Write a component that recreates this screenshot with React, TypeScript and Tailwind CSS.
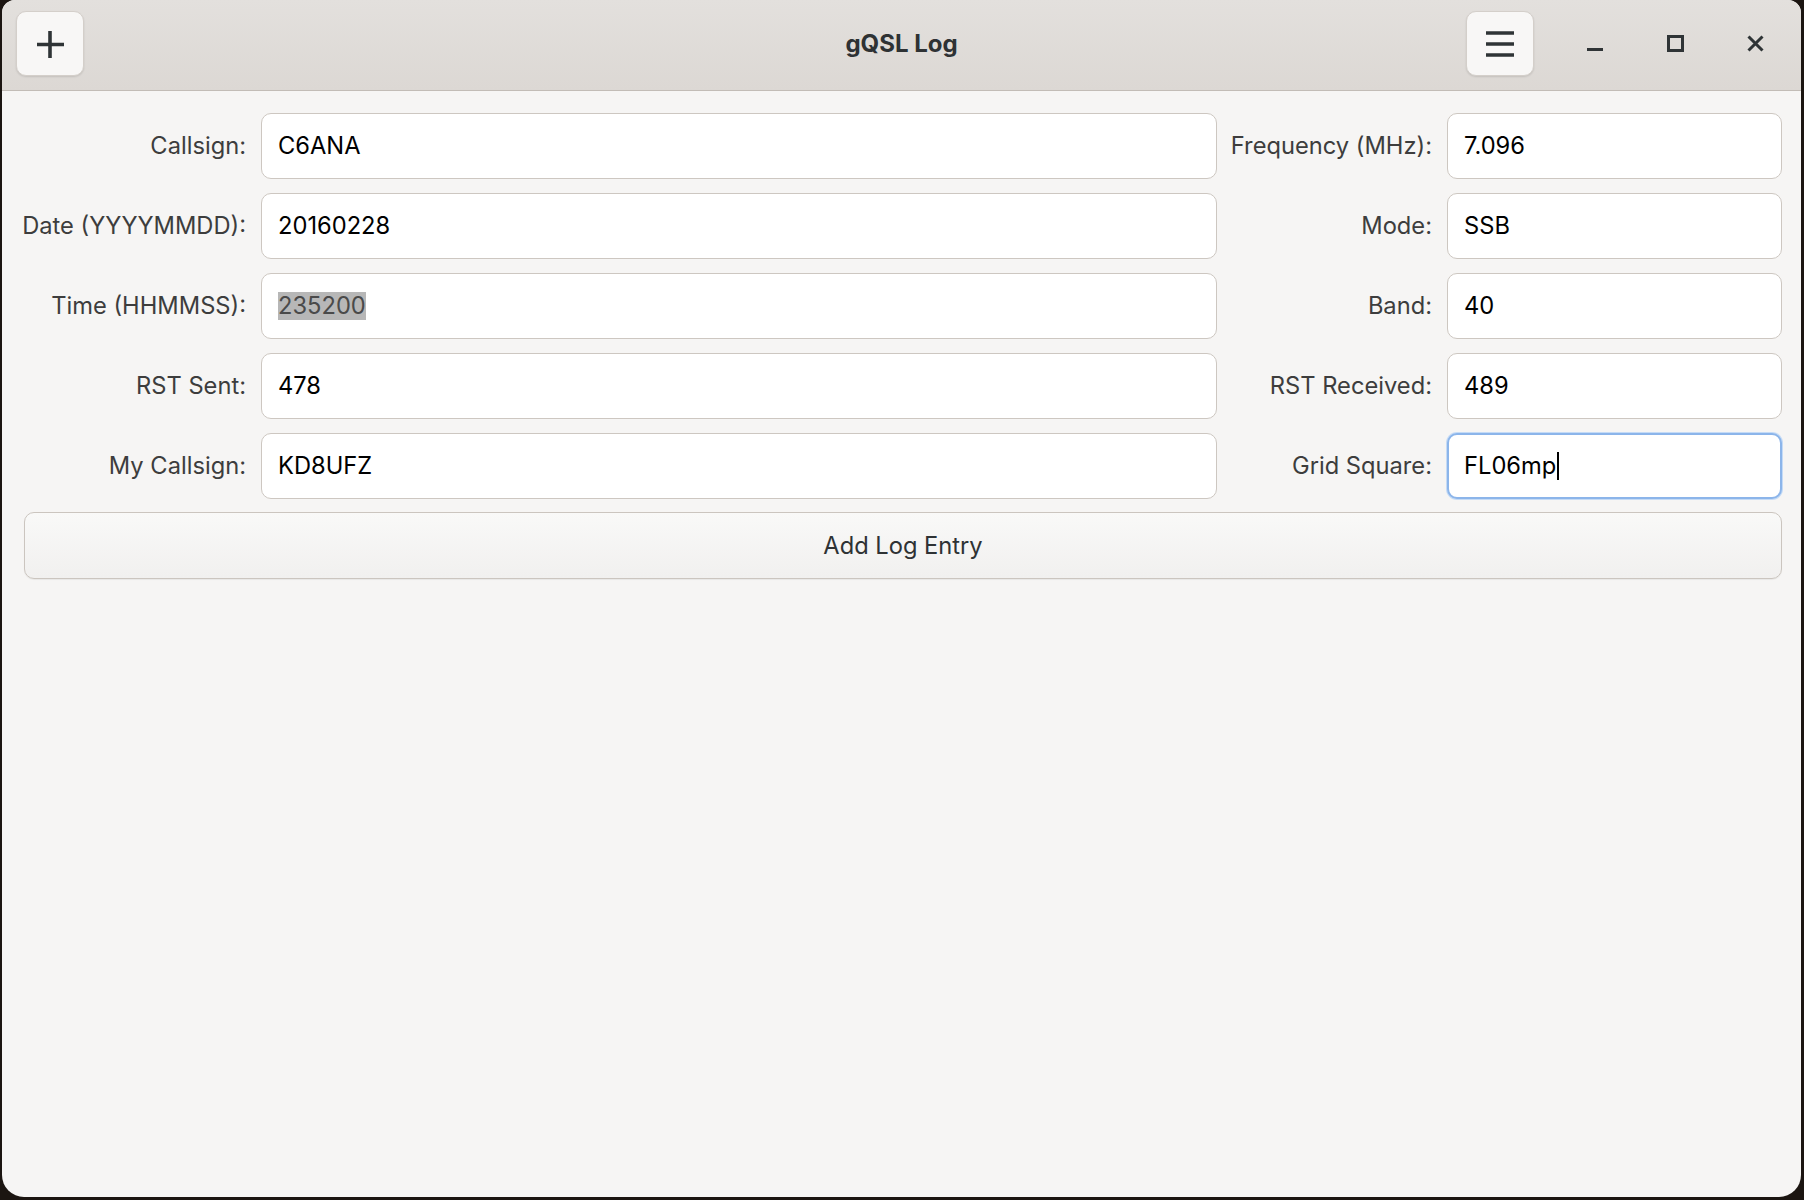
import React from 'react';

const font = { fontFamily: 'Inter, "Noto Sans", sans-serif' };

type Field = { label: string; value: string; selected?: boolean; focused?: boolean };

const rows: [Field, Field][] = [
  [{ label: 'Callsign:', value: 'C6ANA' }, { label: 'Frequency (MHz):', value: '7.096' }],
  [{ label: 'Date (YYYYMMDD):', value: '20160228' }, { label: 'Mode:', value: 'SSB' }],
  [{ label: 'Time (HHMMSS):', value: '235200', selected: true }, { label: 'Band:', value: '40' }],
  [{ label: 'RST Sent:', value: '478' }, { label: 'RST Received:', value: '489' }],
  [{ label: 'My Callsign:', value: 'KD8UFZ' }, { label: 'Grid Square:', value: 'FL06mp', focused: true }],
];

function Label({ text }: { text: string }) {
  return <div className="flex items-center justify-end text-[23.7px] text-[#3d3d3d] whitespace-nowrap">{text}</div>;
}

function Entry({ f }: { f: Field }) {
  const border = f.focused
    ? 'border-2 border-[#8cb5ea] shadow-[0_0_0_1px_#c5dbf6]'
    : 'border border-[#cdc7c1]';
  return (
    <div className={`flex items-center h-[66px] rounded-[10px] bg-white ${f.focused ? 'pl-[15px]' : 'pl-[16px]'} ${border}`}>
      {f.selected ? (
        <span className="text-[23.7px] text-[#4a4a4a] bg-[#b7b7b7] leading-[28px]">{f.value}</span>
      ) : (
        <span className="text-[23.7px] text-black leading-[28px]">{f.value}</span>
      )}
      {f.focused && <span className="w-[2px] h-[28px] bg-black ml-[1px]" />}
    </div>
  );
}

function HeaderButton({ children }: { children: React.ReactNode }) {
  return (
    <button className="w-[68px] h-[65px] rounded-[10px] bg-[#f8f7f6] border border-[#d4cfca] shadow-[0_1px_2px_rgba(0,0,0,0.12)] flex items-center justify-center">
      {children}
    </button>
  );
}

export default function App() {
  return (
    <div className="w-[1804px] h-[1200px] bg-[#1b1511] flex" style={font}>
      <div className="ml-[2px] w-[1799px] h-[1197px] bg-[#f6f5f4] rounded-t-[13px] rounded-b-[22px] overflow-hidden flex flex-col">
        {/* header bar */}
        <div className="h-[91px] shrink-0 flex items-start pt-[11px] pl-[14px] pr-[16px] border-b border-[#c2bcb6] bg-gradient-to-b from-[#e3e0dd] to-[#dcd8d4] relative">
          <HeaderButton>
            <svg width="30" height="30" viewBox="0 0 30 30">
              <path d="M15 2v27M2 15.5h27" stroke="#2f3436" strokeWidth="3.6" />
            </svg>
          </HeaderButton>
          <div className="absolute left-0 right-0 top-[11px] h-[65px] flex items-center justify-center pointer-events-none">
            <span className="text-[24px] font-bold text-[#2e3234]">gQSL Log</span>
          </div>
          <div className="ml-auto flex items-center">
            <HeaderButton>
              <svg width="30" height="26" viewBox="0 0 30 26">
                <path d="M1 2h28M1 13h28M1 24h28" stroke="#2f3436" strokeWidth="3.6" />
              </svg>
            </HeaderButton>
            <div className="w-[60px] h-[65px] ml-[31px] flex items-center justify-center">
              <svg width="16" height="16" viewBox="0 0 16 16">
                <path d="M0 13.5h16" stroke="#2f3436" strokeWidth="3" />
              </svg>
            </div>
            <div className="w-[60px] h-[65px] ml-[20px] flex items-center justify-center">
              <svg width="17" height="17" viewBox="0 0 17 17">
                <rect x="1.5" y="1.5" width="14" height="14" fill="none" stroke="#2f3436" strokeWidth="3" />
              </svg>
            </div>
            <div className="w-[60px] h-[65px] ml-[20px] flex items-center justify-center">
              <svg width="17" height="17" viewBox="0 0 17 17">
                <path d="M1.5 1.5l14 14M15.5 1.5l-14 14" stroke="#2f3436" strokeWidth="3" />
              </svg>
            </div>
          </div>
        </div>

        {/* form */}
        <div className="pt-[22px] pl-[21px] pr-[19px] flex flex-col">
          <div className="grid grid-cols-[223px_1fr_200px_335px] gap-x-[15px] gap-y-[14px]">
            {rows.map((r, i) => (
              <React.Fragment key={i}>
                <Label text={r[0].label} />
                <Entry f={r[0]} />
                <Label text={r[1].label} />
                <Entry f={r[1]} />
              </React.Fragment>
            ))}
          </div>
          <button className="mt-[13px] ml-[1px] h-[67px] rounded-[10px] border border-[#cbc5bf] bg-gradient-to-b from-[#f9f9f8] to-[#f1f0ef] shadow-[0_1px_1px_rgba(0,0,0,0.06)] text-[23.7px] text-[#2e3234]">
            Add Log Entry
          </button>
        </div>
      </div>
    </div>
  );
}
